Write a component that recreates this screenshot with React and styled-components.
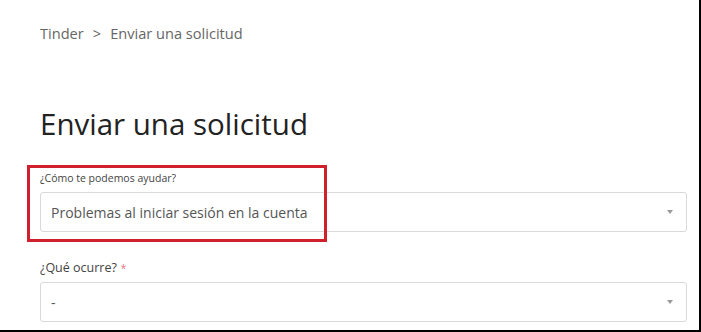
import React from "react";
import styled, { createGlobalStyle } from "styled-components";

const Global = createGlobalStyle`
  html, body { margin: 0; padding: 0; background: #fff; }
  body { font-family: "Open Sans", "Liberation Sans", sans-serif; }
`;

const Page = styled.div`
  position: relative;
  box-sizing: border-box;
  width: 701px;
  height: 332px;
  border-right: 2px solid #000;
  border-bottom: 2px solid #000;
  padding: 24px 12px 0 40px;
  overflow: hidden;
  background: #fff;
`;

const Breadcrumb = styled.nav`
  display: flex;
  gap: 9px;
  font-size: 14.6px;
  line-height: 18px;
  color: #666;
`;

const Title = styled.h1`
  margin: 64px 0 0;
  font-weight: 400;
  font-size: 29.5px;
  line-height: 36px;
  color: #222;
`;

const Field = styled.div`
  display: flex;
  flex-direction: column;
  margin-top: ${(p) => p.$mt}px;
`;

const Label = styled.label`
  font-size: ${(p) => p.$size}px;
  line-height: 16px;
  color: #444;
  margin-bottom: ${(p) => p.$gap}px;
`;

const Required = styled.span`
  color: #e8747c;
  font-size: 10px;
  margin-left: 4px;
`;

const Select = styled.div`
  box-sizing: border-box;
  height: ${(p) => p.$h}px;
  width: 647px;
  border: 1px solid #d9d9d9;
  border-radius: 3px;
  display: flex;
  align-items: center;
  justify-content: space-between;
  padding: 0 13px 0 10px;
  font-size: 14px;
  color: #555;
`;

const Arrow = styled.span`
  width: 0;
  height: 0;
  border-left: 3px solid transparent;
  border-right: 3px solid transparent;
  border-top: 4px solid #9a9a9a;
`;

const Highlight = styled.div`
  position: absolute;
  left: 27px;
  top: 165px;
  width: 300px;
  height: 77px;
  box-sizing: border-box;
  border: 3px solid #d0202e;
  pointer-events: none;
`;

export default function App() {
  return (
    <>
      <Global />
      <Page>
        <Breadcrumb>
          <span>Tinder</span>
          <span>&gt;</span>
          <span>Enviar una solicitud</span>
        </Breadcrumb>
        <Title>Enviar una solicitud</Title>
        <Field $mt={28}>
          <Label $size={10.5} $gap={6}>¿Cómo te podemos ayudar?</Label>
          <Select $h={40}>
            <span>Problemas al iniciar sesión en la cuenta</span>
            <Arrow />
          </Select>
        </Field>
        <Field $mt={28}>
          <Label $size={12.5} $gap={6}>
            ¿Qué ocurre?<Required>*</Required>
          </Label>
          <Select $h={40}>
            <span>-</span>
            <Arrow />
          </Select>
        </Field>
        <Highlight />
      </Page>
    </>
  );
}
